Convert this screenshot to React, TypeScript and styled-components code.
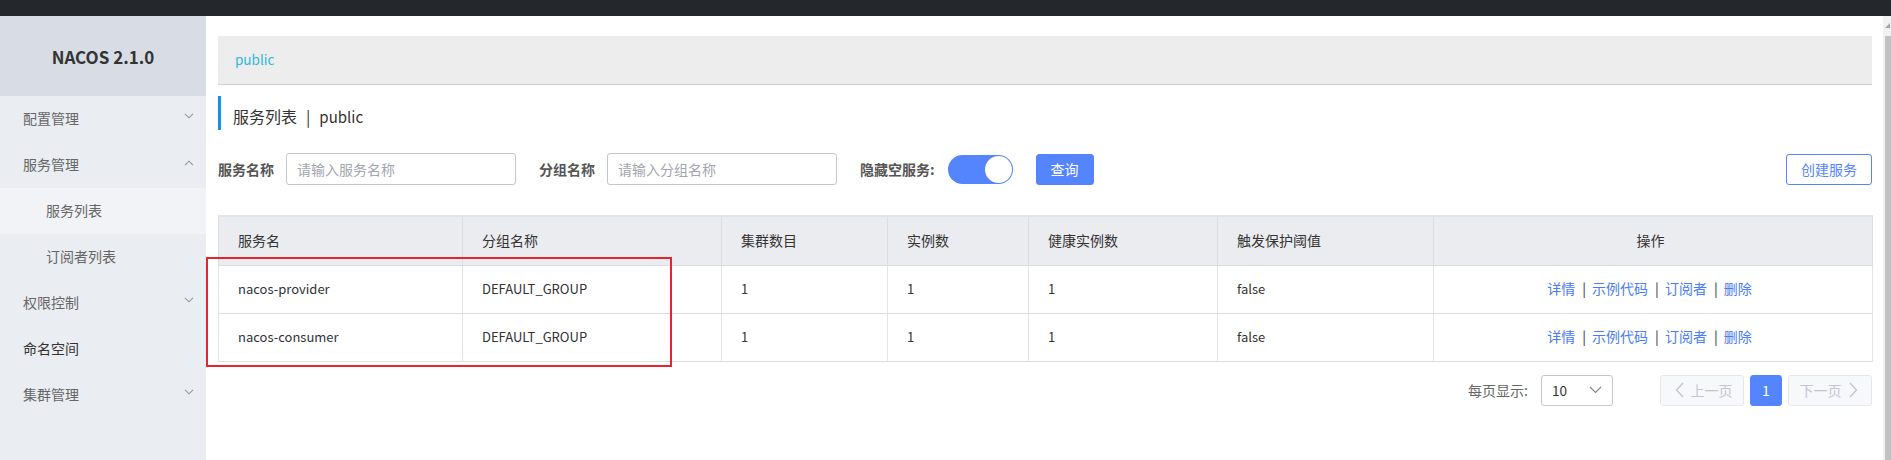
import React from "react";
import styled, { createGlobalStyle } from "styled-components";

const GlobalStyle = createGlobalStyle`
  html, body { margin: 0; padding: 0; }
  body {
    font-family: "Noto Sans CJK SC", "Noto Sans", sans-serif;
    font-size: 14px;
    color: #333;
    background: #fff;
    overflow: hidden;
  }
  * { box-sizing: border-box; }
`;

const Page = styled.div`
  display: flex;
  flex-direction: column;
  height: 100vh;
  width: 100%;
`;

const TopBar = styled.div`
  height: 16px;
  background: #24282d;
  flex-shrink: 0;
`;

const Body = styled.div`
  flex: 1;
  display: flex;
  min-height: 0;
`;

const Sidebar = styled.nav`
  width: 206px;
  flex-shrink: 0;
  background: #eaedf1;
  display: flex;
  flex-direction: column;
`;

const Logo = styled.div`
  height: 80px;
  background: #d8dde5;
  display: flex;
  align-items: center;
  justify-content: center;
  font-weight: 700;
  font-size: 17px;
  color: #333;
`;

const MenuItem = styled.div<{ $sub?: boolean; $active?: boolean; $leaf?: boolean }>`
  height: 46px;
  display: flex;
  align-items: center;
  justify-content: space-between;
  padding: 0 12px 2px ${(p) => (p.$sub ? "46px" : "23px")};
  background: ${(p) => (p.$active ? "#f2f3f6" : "transparent")};
  color: ${(p) => (p.$leaf ? "#333" : "#666")};
  font-size: 14px;
`;

const Chevron = ({ up }: { up?: boolean }) => (
  <svg width="10" height="6" viewBox="0 0 10 6" style={{ marginTop: up ? -2 : -4 }}>
    <path
      d={up ? "M1 5.2 L5 1.2 L9 5.2" : "M1 0.8 L5 4.8 L9 0.8"}
      fill="none"
      stroke="#8c99ad"
      strokeWidth="1.1"
    />
  </svg>
);

const Main = styled.main`
  flex: 1;
  min-width: 0;
  padding: 20px 11px 0 12px;
  display: flex;
  flex-direction: column;
`;

const Scrollbar = styled.div`
  width: 8px;
  flex-shrink: 0;
  background: #f1f1f1;
  display: flex;
  flex-direction: column;
  align-items: flex-end;
`;

const ScrollArrow = styled.div`
  height: 20px;
  width: 100%;
  display: flex;
  align-items: center;
  justify-content: flex-end;
`;

const ScrollThumb = styled.div`
  flex: 1;
  width: 6px;
  background: #c1c1c1;
`;

const Breadcrumb = styled.div`
  height: 49px;
  background: #ededed;
  border-bottom: 1px solid #cfcfcf;
  display: flex;
  align-items: center;
  padding: 0 0 2px 17px;
  color: #2db7da;
  font-size: 13.5px;
`;

const Title = styled.h2`
  margin: 11px 0 0;
  height: 34px;
  border-left: 3px solid #1296db;
  padding: 9px 0 0 12px;
  font-size: 16px;
  font-weight: 400;
  line-height: 22px;
  color: #333;
`;

const TitleSep = styled.span`
  margin: 0 9px;
`;

const Latin = styled.span`
  font-size: 15px;
`;

const FilterRow = styled.div`
  margin-top: 23px;
  height: 32px;
  display: flex;
  align-items: center;
`;

const FormItem = styled.div<{ $gap?: number }>`
  display: flex;
  align-items: center;
  margin-right: 23px;
  gap: ${(p) => p.$gap ?? 12}px;
`;

const Label = styled.label`
  font-weight: 700;
  color: #555;
  font-size: 14px;
  white-space: nowrap;
`;

const Input = styled.input`
  width: 230px;
  height: 32px;
  border: 1px solid #c4c6cf;
  border-radius: 3px;
  padding: 0 10px;
  font-family: inherit;
  font-size: 14px;
  color: #333;
  outline: none;
  &::placeholder { color: #a3a5ae; }
`;

const Switch = styled.div`
  position: relative;
  width: 65px;
  height: 29px;
  border-radius: 15px;
  background: #5584ff;
`;

const Knob = styled.div`
  position: absolute;
  top: 1px;
  right: 1px;
  width: 27px;
  height: 27px;
  border-radius: 50%;
  background: #fff;
`;

const Button = styled.button<{ $primary?: boolean }>`
  height: 31px;
  padding: 0 14px;
  border-radius: 3px;
  font-family: inherit;
  font-size: 14px;
  cursor: pointer;
  border: 1px solid #5584ff;
  background: ${(p) => (p.$primary ? "#5584ff" : "#fff")};
  color: ${(p) => (p.$primary ? "#fff" : "#5584ff")};
`;

const Spacer = styled.div`
  flex: 1;
`;

const TableWrap = styled.div`
  position: relative;
  margin-top: 30px;
`;

const Table = styled.table`
  width: 100%;
  border-collapse: collapse;
  table-layout: fixed;
  border: 1px solid #dcdee3;
`;

const Th = styled.th<{ $center?: boolean }>`
  height: 49px;
  background: #ebecf0;
  font-weight: 400;
  font-size: 14px;
  color: #333;
  text-align: ${(p) => (p.$center ? "center" : "left")};
  padding: ${(p) => (p.$center ? "0 5px 2px 0" : "0 0 2px 19px")};
  border: 1px solid #dcdee3;
  border-top: 2px solid #e3e4e8;
`;

const Td = styled.td<{ $center?: boolean; $latin?: boolean }>`
  height: 48px;
  font-size: ${(p) => (p.$latin ? "13px" : "14px")};
  color: #333;
  text-align: ${(p) => (p.$center ? "center" : "left")};
  padding: ${(p) => (p.$center ? "0 7px 2px 0" : "0 0 2px 19px")};
  border: 1px solid #e3e4e8;
  border-bottom-color: #dcdee3;
`;

const Link = styled.a`
  color: #4a7cf5;
  text-decoration: none;
  cursor: pointer;
`;

const LinkSep = styled.span`
  color: #333;
  margin: 0 6px 0 7px;
`;

const Highlight = styled.div`
  position: absolute;
  left: -12px;
  top: 42px;
  width: 466px;
  height: 110px;
  border: 2px solid #e3262e;
  pointer-events: none;
`;

const Pagination = styled.div`
  margin-top: 13px;
  height: 31px;
  display: flex;
  align-items: center;
  justify-content: flex-end;
`;

const PageSizeLabel = styled.span`
  color: #666;
  font-size: 14px;
  margin-right: 13px;
`;

const Select = styled.div`
  width: 72px;
  height: 31px;
  border: 1px solid #c4c6cf;
  border-radius: 3px;
  display: flex;
  align-items: center;
  justify-content: space-between;
  padding: 0 10px 0 10px;
  color: #333;
  font-size: 13.5px;
  margin-right: 41px;
`;

const PageBtn = styled.div<{ $current?: boolean }>`
  height: 31px;
  min-width: ${(p) => (p.$current ? "32px" : "84px")};
  border-radius: 3px;
  display: flex;
  align-items: center;
  justify-content: center;
  gap: 3px;
  margin-left: 6px;
  font-size: 14px;
  background: ${(p) => (p.$current ? "#5584ff" : "#f7f8fa")};
  border: 1px solid ${(p) => (p.$current ? "#5584ff" : "#e6e7eb")};
  color: ${(p) => (p.$current ? "#fff" : "#c4c6cf")};
`;

const Arrow = ({ dir, color = "#c4c6cf" }: { dir: "left" | "right" | "down"; color?: string }) => {
  if (dir === "down") {
    return (
      <svg width="13" height="8" viewBox="0 0 13 8">
        <path d="M1 1 L6.5 6.5 L12 1" fill="none" stroke={color} strokeWidth="1.2" />
      </svg>
    );
  }
  return (
    <svg width="16" height="18" viewBox="0 0 16 18">
      <path
        d={dir === "left" ? "M11 2 L4.5 9 L11 16" : "M5 2 L11.5 9 L5 16"}
        fill="none"
        stroke={color}
        strokeWidth="1.4"
      />
    </svg>
  );
};

const columns = [
  { title: "服务名", width: 244 },
  { title: "分组名称", width: 259 },
  { title: "集群数目", width: 166 },
  { title: "实例数", width: 141 },
  { title: "健康实例数", width: 189 },
  { title: "触发保护阈值", width: 216 },
  { title: "操作", width: 439, center: true },
];

const rows = [
  { name: "nacos-provider", group: "DEFAULT_GROUP", clusters: 1, instances: 1, healthy: 1, threshold: "false" },
  { name: "nacos-consumer", group: "DEFAULT_GROUP", clusters: 1, instances: 1, healthy: 1, threshold: "false" },
];

const actions = ["详情", "示例代码", "订阅者", "删除"];

export default function App() {
  return (
    <>
      <GlobalStyle />
      <Page>
        <TopBar />
        <Body>
          <Sidebar>
            <Logo>NACOS 2.1.0</Logo>
            <MenuItem>
              配置管理
              <Chevron />
            </MenuItem>
            <MenuItem>
              服务管理
              <Chevron up />
            </MenuItem>
            <MenuItem $sub $active>服务列表</MenuItem>
            <MenuItem $sub>订阅者列表</MenuItem>
            <MenuItem>
              权限控制
              <Chevron />
            </MenuItem>
            <MenuItem $leaf>命名空间</MenuItem>
            <MenuItem>
              集群管理
              <Chevron />
            </MenuItem>
          </Sidebar>
          <Main>
            <Breadcrumb>public</Breadcrumb>
            <Title>
              服务列表<TitleSep>|</TitleSep>
              <Latin>public</Latin>
            </Title>
            <FilterRow>
              <FormItem>
                <Label>服务名称</Label>
                <Input placeholder="请输入服务名称" />
              </FormItem>
              <FormItem>
                <Label>分组名称</Label>
                <Input placeholder="请输入分组名称" />
              </FormItem>
              <FormItem $gap={13}>
                <Label>隐藏空服务:</Label>
                <Switch>
                  <Knob />
                </Switch>
              </FormItem>
              <Button $primary>查询</Button>
              <Spacer />
              <Button>创建服务</Button>
            </FilterRow>
            <TableWrap>
              <Table>
                <colgroup>
                  {columns.map((c) => (
                    <col key={c.title} style={{ width: c.width }} />
                  ))}
                </colgroup>
                <thead>
                  <tr>
                    {columns.map((c) => (
                      <Th key={c.title} $center={c.center}>
                        {c.title}
                      </Th>
                    ))}
                  </tr>
                </thead>
                <tbody>
                  {rows.map((r) => (
                    <tr key={r.name}>
                      <Td $latin>{r.name}</Td>
                      <Td $latin>{r.group}</Td>
                      <Td $latin>{r.clusters}</Td>
                      <Td $latin>{r.instances}</Td>
                      <Td $latin>{r.healthy}</Td>
                      <Td $latin>{r.threshold}</Td>
                      <Td $center>
                        {actions.map((a, i) => (
                          <React.Fragment key={a}>
                            {i > 0 && <LinkSep>|</LinkSep>}
                            <Link>{a}</Link>
                          </React.Fragment>
                        ))}
                      </Td>
                    </tr>
                  ))}
                </tbody>
              </Table>
              <Highlight />
            </TableWrap>
            <Pagination>
              <PageSizeLabel>每页显示:</PageSizeLabel>
              <Select>
                10
                <Arrow dir="down" color="#888" />
              </Select>
              <PageBtn>
                <Arrow dir="left" />
                上一页
              </PageBtn>
              <PageBtn $current>1</PageBtn>
              <PageBtn>
                下一页
                <Arrow dir="right" />
              </PageBtn>
            </Pagination>
          </Main>
          <Scrollbar>
            <ScrollArrow>
              <svg width="6" height="6" viewBox="0 0 6 6">
                <path d="M0 5 L5 0 L5 5 Z" fill="#a3a3a3" />
              </svg>
            </ScrollArrow>
            <ScrollThumb />
          </Scrollbar>
        </Body>
      </Page>
    </>
  );
}
